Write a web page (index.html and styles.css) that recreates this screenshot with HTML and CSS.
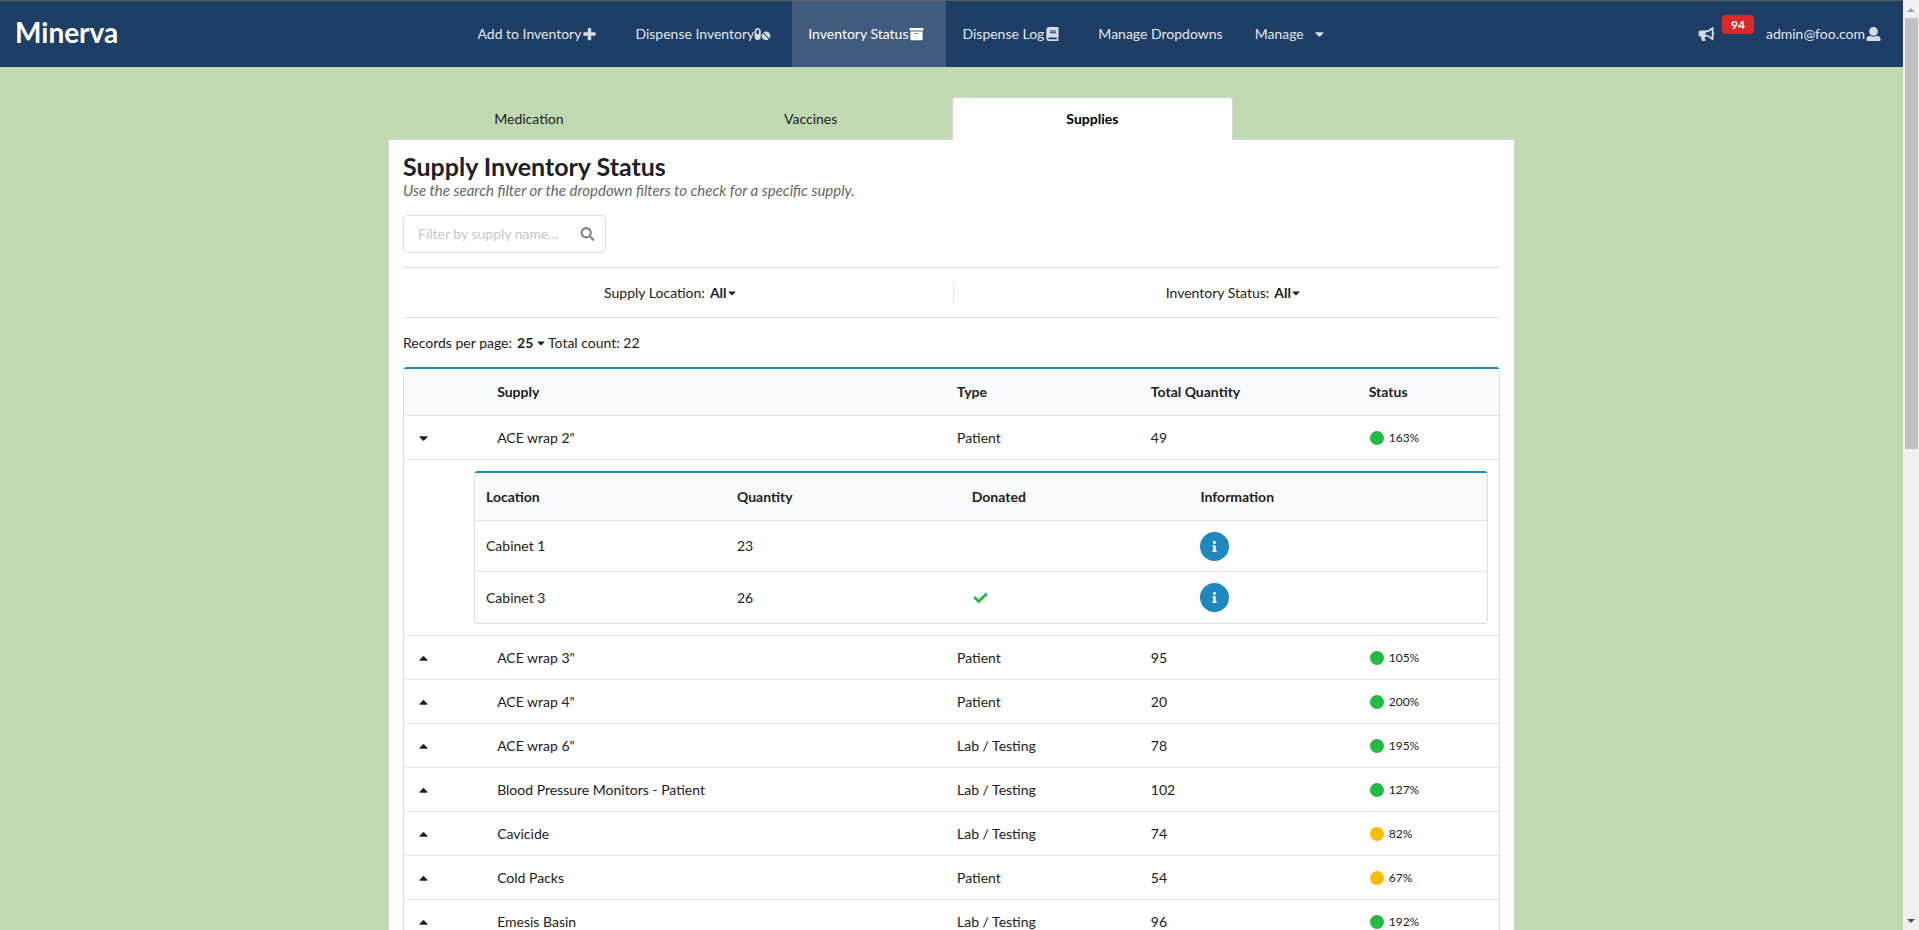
FILE: index.html
```html
<!DOCTYPE html>
<html lang="en">
<head>
<meta charset="utf-8">
<title>Minerva</title>
<link rel="stylesheet" href="styles.css">
</head>
<body>
<svg class="sprite" aria-hidden="true">
  <symbol id="plus" viewBox="0 0 448 512"><path d="M448 294.2v-76.4c0-13.3-10.7-24-24-24H286.2V56c0-13.3-10.7-24-24-24h-76.4c-13.3 0-24 10.7-24 24v137.8H24c-13.3 0-24 10.7-24 24v76.4c0 13.3 10.7 24 24 24h137.8V456c0 13.3 10.7 24 24 24h76.4c13.3 0 24-10.7 24-24V318.2H424c13.3 0 24-10.7 24-24z"/></symbol>
  <symbol id="pills" viewBox="0 0 576 512"><path d="M112 32C50.1 32 0 82.1 0 144v224c0 61.9 50.1 112 112 112s112-50.1 112-112V144c0-61.9-50.1-112-112-112zm48 224H64V144c0-26.5 21.5-48 48-48s48 21.5 48 48v112zm139.7-29.7c-3.5-3.5-9.4-3.1-12.3.8-45.3 62.5-40.4 150.1 15.9 206.4 56.3 56.3 143.9 61.2 206.4 15.9 4-2.9 4.3-8.8.8-12.3L299.7 226.3zm229.8-19c-56.3-56.3-143.9-61.2-206.4-15.9-4 2.9-4.3 8.8-.8 12.3l210.8 210.8c3.5 3.5 9.4 3.1 12.3-.8 45.3-62.6 40.5-150.1-15.9-206.4z"/></symbol>
  <symbol id="archive" viewBox="0 0 512 512"><path d="M32 448c0 17.7 14.3 32 32 32h384c17.7 0 32-14.3 32-32V160H32v288zm160-212c0-6.6 5.4-12 12-12h104c6.6 0 12 5.4 12 12v8c0 6.6-5.4 12-12 12H204c-6.6 0-12-5.4-12-12v-8zM480 32H32C14.3 32 0 46.3 0 64v48c0 8.8 7.2 16 16 16h480c8.8 0 16-7.2 16-16V64c0-17.7-14.3-32-32-32z"/></symbol>
  <symbol id="book" viewBox="0 0 448 512"><path d="M448 360V24c0-13.3-10.7-24-24-24H96C43 0 0 43 0 96v320c0 53 43 96 96 96h328c13.3 0 24-10.7 24-24v-16c0-7.5-3.5-14.3-8.900-18.7-4.2-15.4-4.2-59.3 0-74.7 5.4-4.3 8.9-11.1 8.9-18.6zM128 134c0-3.3 2.7-6 6-6h212c3.3 0 6 2.7 6 6v20c0 3.3-2.7 6-6 6H134c-3.3 0-6-2.7-6-6v-20zm0 64c0-3.3 2.7-6 6-6h212c3.3 0 6 2.7 6 6v20c0 3.3-2.7 6-6 6H134c-3.3 0-6-2.7-6-6v-20zm253.4 250H96c-17.7 0-32-14.3-32-32 0-17.6 14.4-32 32-32h285.4c-1.9 17.1-1.9 46.9 0 64z"/></symbol>
  <symbol id="bullhorn" viewBox="0 0 576 512"><path d="M576 240c0-23.63-12.95-44.04-32-55.12V32.01C544 23.26 537.02 0 512 0c-7.12 0-14.19 2.38-19.98 7.02l-85.03 68.03C364.28 109.19 310.66 128 256 128H64c-35.35 0-64 28.65-64 64v96c0 35.35 28.65 64 64 64h33.7c-1.39 10.48-2.18 21.14-2.18 32 0 39.77 9.26 77.35 25.56 110.94 5.19 10.69 16.52 17.06 28.4 17.06h74.28c26.05 0 41.69-29.84 25.9-50.56-16.4-21.52-26.15-48.36-26.15-77.44 0-11.11 1.62-21.79 4.41-32H256c54.66 0 108.28 18.81 150.98 52.95l85.03 68.03a32.023 32.023 0 0 0 19.98 7.02c24.92 0 32-22.78 32-32V295.13C563.05 284.04 576 263.63 576 240zm-96 141.42l-33.05-26.44C392.95 311.78 325.12 288 256 288v-96c69.12 0 136.95-23.78 190.95-66.98L480 98.58v282.84z"/></symbol>
  <symbol id="user" viewBox="0 0 512 512"><path d="M256 0c88.366 0 160 71.634 160 160s-71.634 160-160 160S96 248.366 96 160 167.634 0 256 0zm183.283 333.821l-71.313-17.828c-74.923 53.89-165.738 41.864-223.94 0l-71.313 17.828C29.981 344.505 0 382.903 0 426.955V464c0 26.51 21.49 48 48 48h416c26.51 0 48-21.49 48-48v-37.045c0-44.052-29.981-82.45-72.717-93.134z"/></symbol>
  <symbol id="search" viewBox="0 0 512 512"><path d="M505 442.7L405.3 343c-4.5-4.5-10.6-7-17-7H372c27.6-35.3 44-79.7 44-128C416 93.1 322.9 0 208 0S0 93.1 0 208s93.1 208 208 208c48.3 0 92.7-16.4 128-44v16.3c0 6.4 2.5 12.5 7 17l99.7 99.7c9.4 9.4 24.6 9.4 33.9 0l28.3-28.3c9.4-9.4 9.4-24.6.1-34zM208 336c-70.7 0-128-57.2-128-128 0-70.7 57.2-128 128-128 70.7 0 128 57.2 128 128 0 70.7-57.2 128-128 128z"/></symbol>
  <symbol id="down" viewBox="0 0 320 512"><path d="M31.3 192h257.3c17.8 0 26.7 21.5 14.1 34.1L174.1 354.8c-7.8 7.8-20.5 7.8-28.3 0L17.2 226.1C4.6 213.5 13.5 192 31.3 192z"/></symbol>
  <symbol id="up" viewBox="0 0 320 512"><path d="M288.662 352H31.338c-17.818 0-26.741-21.543-14.142-34.142l128.662-128.662c7.81-7.81 20.474-7.81 28.284 0l128.662 128.662c12.6 12.599 3.676 34.142-14.142 34.142z"/></symbol>
  <symbol id="check" viewBox="0 0 512 512"><path d="M173.898 439.404l-166.4-166.4c-9.997-9.997-9.997-26.206 0-36.204l36.203-36.204c9.997-9.998 26.207-9.998 36.204 0L192 312.69 432.095 72.596c9.997-9.997 26.207-9.997 36.204 0l36.203 36.204c9.997 9.997 9.997 26.206 0 36.204l-294.4 294.401c-9.998 9.997-26.207 9.997-36.204-.001z"/></symbol>
  <symbol id="info" viewBox="0 0 192 512"><path d="M20 424.229h20V279.771H20c-11.046 0-20-8.954-20-20V212c0-11.046 8.954-20 20-20h112c11.046 0 20 8.954 20 20v212.229h20c11.046 0 20 8.954 20 20V492c0 11.046-8.954 20-20 20H20c-11.046 0-20-8.954-20-20v-47.771c0-11.046 8.954-20 20-20zM96 0C56.235 0 24 32.235 24 72s32.235 72 72 72 72-32.235 72-72S135.764 0 96 0z"/></symbol>
</svg>

<div class="page">
  <header class="navbar">
    <h1 class="brand">Minerva</h1>
    <nav class="nav-main">
      <a class="nav-item" href="#">Add to Inventory<svg class="icon"><use href="#plus"/></svg></a>
      <a class="nav-item" href="#">Dispense Inventory<svg class="icon"><use href="#pills"/></svg></a>
      <a class="nav-item active" href="#">Inventory Status<svg class="icon"><use href="#archive"/></svg></a>
      <a class="nav-item" href="#">Dispense Log<svg class="icon"><use href="#book"/></svg></a>
      <a class="nav-item" href="#">Manage Dropdowns</a>
      <button class="nav-item nav-drop" type="button" aria-haspopup="true">Manage<svg class="icon"><use href="#down"/></svg></button>
    </nav>
    <div class="nav-user">
      <button class="nav-item notify" type="button" aria-label="Notifications"><svg class="icon"><use href="#bullhorn"/></svg><span class="badge">94</span></button>
      <a class="nav-item" href="#">admin@foo.com<svg class="icon"><use href="#user"/></svg></a>
    </div>
  </header>

  <main class="container">
    <div class="tabs" role="tablist">
      <button class="tab" type="button" role="tab" aria-selected="false">Medication</button>
      <button class="tab" type="button" role="tab" aria-selected="false">Vaccines</button>
      <button class="tab selected" type="button" role="tab" aria-selected="true">Supplies</button>
    </div>
    <section class="panel">
      <h2 class="title">Supply Inventory Status</h2>
      <p class="hint">Use the search filter or the dropdown filters to check for a specific supply.</p>
      <label class="search"><input type="text" placeholder="Filter by supply name..." aria-label="Filter by supply name"><svg class="icon"><use href="#search"/></svg></label>

      <div class="filters">
        <label class="filter"><span>Supply Location:</span><select class="pick"><option>All</option></select><svg class="caret"><use href="#down"/></svg></label>
        <label class="filter"><span>Inventory Status:</span><select class="pick"><option>All</option></select><svg class="caret"><use href="#down"/></svg></label>
      </div>

      <div class="records">
        <label class="per-page"><span>Records per page:</span><select class="pick"><option>25</option></select><svg class="caret"><use href="#down"/></svg></label>
        <span>Total count: 22</span>
      </div>

      <table class="grid supplies">
        <colgroup><col class="c-toggle"><col class="c-supply"><col class="c-type"><col class="c-total"><col></colgroup>
        <thead><tr><th></th><th>Supply</th><th>Type</th><th>Total Quantity</th><th>Status</th></tr></thead>
        <tbody>
          <tr><td><button class="toggle" type="button" aria-label="Collapse" aria-expanded="true"><svg class="icon"><use href="#down"/></svg></button></td><td>ACE wrap 2"</td><td>Patient</td><td>49</td><td><div class="status"><i class="dot"></i>163%</div></td></tr>
          <tr>
            <td class="detail" colspan="5">
              <table class="grid cabinets">
                <colgroup><col class="c-location"><col class="c-quantity"><col class="c-donated"><col></colgroup>
                <thead><tr><th>Location</th><th>Quantity</th><th>Donated</th><th>Information</th></tr></thead>
                <tbody>
                  <tr><td>Cabinet 1</td><td>23</td><td></td><td><button class="info" type="button" aria-label="Information"><svg class="icon"><use href="#info"/></svg></button></td></tr>
                  <tr><td>Cabinet 3</td><td>26</td><td><svg class="icon check"><use href="#check"/></svg></td><td><button class="info" type="button" aria-label="Information"><svg class="icon"><use href="#info"/></svg></button></td></tr>
                </tbody>
              </table>
            </td>
          </tr>
          <tr><td><button class="toggle" type="button" aria-label="Expand"><svg class="icon"><use href="#up"/></svg></button></td><td>ACE wrap 3"</td><td>Patient</td><td>95</td><td><div class="status"><i class="dot"></i>105%</div></td></tr>
          <tr><td><button class="toggle" type="button" aria-label="Expand"><svg class="icon"><use href="#up"/></svg></button></td><td>ACE wrap 4"</td><td>Patient</td><td>20</td><td><div class="status"><i class="dot"></i>200%</div></td></tr>
          <tr><td><button class="toggle" type="button" aria-label="Expand"><svg class="icon"><use href="#up"/></svg></button></td><td>ACE wrap 6"</td><td>Lab / Testing</td><td>78</td><td><div class="status"><i class="dot"></i>195%</div></td></tr>
          <tr><td><button class="toggle" type="button" aria-label="Expand"><svg class="icon"><use href="#up"/></svg></button></td><td>Blood Pressure Monitors - Patient</td><td>Lab / Testing</td><td>102</td><td><div class="status"><i class="dot"></i>127%</div></td></tr>
          <tr><td><button class="toggle" type="button" aria-label="Expand"><svg class="icon"><use href="#up"/></svg></button></td><td>Cavicide</td><td>Lab / Testing</td><td>74</td><td><div class="status"><i class="dot low"></i>82%</div></td></tr>
          <tr><td><button class="toggle" type="button" aria-label="Expand"><svg class="icon"><use href="#up"/></svg></button></td><td>Cold Packs</td><td>Patient</td><td>54</td><td><div class="status"><i class="dot low"></i>67%</div></td></tr>
          <tr><td><button class="toggle" type="button" aria-label="Expand"><svg class="icon"><use href="#up"/></svg></button></td><td>Emesis Basin</td><td>Lab / Testing</td><td>96</td><td><div class="status"><i class="dot"></i>192%</div></td></tr>
        </tbody>
      </table>
    </section>
  </main>
</div>
<div class="scrollbar" aria-hidden="true">
  <svg class="arrow dim" viewBox="0 0 8 4"><path d="M0 4L4 0L8 4z"/></svg>
  <div class="track"><div class="thumb"></div></div>
  <svg class="arrow" viewBox="0 0 8 4"><path d="M0 0L4 4L8 0z"/></svg>
</div>
</body>
</html>
```
FILE: styles.css
```css
* { box-sizing: border-box; }

body {
  margin: 0;
  height: 100vh;
  display: flex;
  overflow: hidden;
  background: #c1d9b1;
  color: #212121;
  font: 14px/20px Lato, "Liberation Sans", sans-serif;
}

button, input, select { font: inherit; color: inherit; }
button { border: 0; background: none; padding: 0; cursor: pointer; }
.sprite { position: absolute; width: 0; height: 0; }
.icon { width: 17px; height: 14px; fill: currentColor; flex: none; display: block; }

.page { flex: 1; min-width: 0; height: 100vh; overflow: hidden; }

/* Top bar */
.navbar {
  display: grid;
  grid-template-columns: 24.25% auto 1fr;
  height: 67px;
  border-top: 1px solid #555f66;
  background: #1e3e66;
  color: #fff;
}
.brand { margin: 0; padding: 15px; font-size: 28px; line-height: 32px; font-weight: 700; }
.nav-main, .nav-user { display: flex; }
.nav-user { justify-content: flex-end; gap: 14px; }
.nav-item {
  display: flex;
  align-items: center;
  padding: 0 16px;
  color: rgba(255, 255, 255, .9);
  text-decoration: none;
  white-space: nowrap;
}
.nav-item .icon { margin-right: 5px; opacity: .9; }
.nav-item.active { background: #405b7e; color: #fff; }
.nav-item.active .icon { opacity: 1; }
.nav-drop .icon { margin: 0 0 0 7px; }
.notify { position: relative; }
.badge {
  position: absolute;
  top: 14px;
  left: 40px;
  padding: 0 9px;
  border-radius: 4px;
  background: #db2828;
  color: #fff;
  font-size: 12px;
  line-height: 19px;
  font-weight: 700;
}

/* Tabs and content */
.container { width: 1127px; max-width: 100%; margin: 0 auto; padding-top: 30px; }
.tabs { display: flex; }
.tab { width: 25%; height: 43px; border: 1px solid transparent; border-bottom: 0; }
.tab.selected {
  position: relative;
  z-index: 1;
  background: #fff;
  border-color: #d4d4d5;
  border-radius: 4px 4px 0 0;
  color: #000;
  font-weight: 700;
}
.panel { margin-top: -1px; padding: 13px 14px 14px; border: 1px solid #d4d4d5; background: #fff; }
.title { margin: 0; font-size: 25px; line-height: 26px; font-weight: 700; }
.hint { margin: 0 0 13px; font-size: 15px; line-height: 23px; font-style: italic; color: #666; }

.search {
  display: flex;
  align-items: center;
  width: 203px;
  height: 38px;
  padding: 0 9px 0 14px;
  border: 1px solid #dedede;
  border-radius: 4px;
}
.search input { flex: 1; min-width: 0; border: 0; padding: 0; outline: 0; background: none; }
.search input::placeholder { color: #c7c7c7; }
.search .icon { color: #888; }

.filters {
  display: flex;
  margin-top: 14px;
  padding: 15px 0 14px;
  border: solid #dedede;
  border-width: 1px 0;
}
.filter { flex: 1; display: flex; align-items: center; justify-content: center; padding-right: 16px; }
.filter + .filter { border-left: 1px solid #dedede; padding: 0 0 0 12px; }
.pick {
  appearance: none;
  border: 0;
  padding: 0;
  margin-left: 5px;
  background: none;
  font-weight: 700;
}
.caret { width: 8px; height: 12px; margin-left: 1px; fill: currentColor; }
.records { display: flex; gap: 3px; padding: 15px 0 14px; }
.per-page { display: flex; align-items: center; }
.per-page .caret { margin-left: 3px; }

/* Tables */
.grid {
  width: 100%;
  table-layout: fixed;
  border-collapse: separate;
  border-spacing: 0;
  border: 1px solid #dededf;
  border-top: 2px solid #2185d0;
  border-radius: 4px;
}
.grid th { height: 47px; padding: 0 11px; background: #f9fafb; text-align: left; font-weight: 700; border-bottom: 1px solid #e4e5e6; }
.grid td { height: 44px; padding: 0 11px; border-bottom: 1px solid #e6e6e6; }
.grid tbody tr:last-child > td { border-bottom: 0; }
.c-toggle { width: 7.5%; }
.c-supply { width: 42%; }
.c-type { width: 17.7%; }
.c-total { width: 19.9%; }
.grid .detail { padding: 11px 11px 11px 70px; }
.cabinets th { height: 48px; }
.cabinets td { height: 51px; }
.c-location { width: 24.8%; }
.c-quantity { width: 23.2%; }
.c-donated { width: 22.6%; }
.toggle { display: block; }
.status { display: flex; align-items: center; gap: 5px; padding-left: 1px; font-size: 12px; }
.dot { width: 14px; height: 14px; border-radius: 50%; background: #21ba45; }
.dot.low { background: #fbbd08; }
.check { color: #21ba45; }
.info {
  display: flex;
  align-items: center;
  justify-content: center;
  width: 29px;
  height: 29px;
  border-radius: 50%;
  background: #1f88be;
  color: #fff;
}
.info .icon { height: 11px; }

/* Window scrollbar */
.scrollbar {
  width: 16px;
  padding: 8px 0 7px;
  display: flex;
  flex-direction: column;
  align-items: center;
  gap: 6px;
  background: #f0f0f0;
}
.arrow { width: 8px; height: 4px; fill: #505050; }
.arrow.dim { fill: #a3a3a3; }
.track { flex: 1; width: 13px; }
.thumb { height: 48.2%; background: #c1c1c1; }
```
